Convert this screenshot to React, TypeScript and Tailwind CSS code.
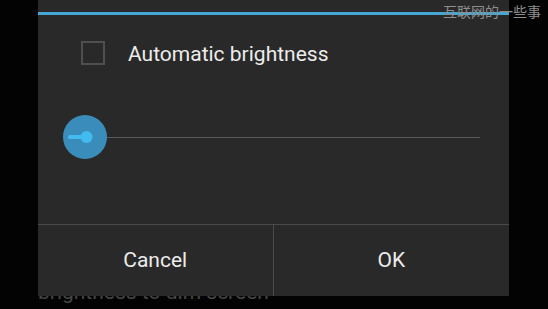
import React from "react";

export default function App() {
  return (
    <div
      className="relative w-[548px] h-[309px] overflow-hidden bg-[#030303]"
      style={{ fontFamily: "Roboto, 'Noto Sans', sans-serif" }}
    >
      {/* background text peeking out below the dialog */}
      <div className="absolute left-[38px] top-[282px] text-[21px] leading-[21px] text-[#464646] whitespace-nowrap">
        brightness to dim screen
      </div>

      {/* dialog */}
      <div className="relative z-10 ml-[38px] w-[471px] h-[296px] bg-[#292929] flex flex-col">
        <div className="h-[12px]" />
        <div className="h-[3px] bg-[#45a8d4]" />

        {/* checkbox row */}
        <div className="flex items-center pt-[25px] pl-[43px]">
          <div className="w-[24px] h-[24px] border-2 border-[#4f4f4f] box-border" />
          <span className="ml-[23px] text-[21px] leading-[24px] text-[#ececec] pt-[2px]">
            Automatic brightness
          </span>
        </div>

        {/* slider */}
        <div className="flex items-center mt-[49px] pl-[25px] pr-[29px] h-[44px]">
          <svg width="44" height="44" viewBox="0 0 44 44" className="shrink-0">
            <circle cx="22" cy="22" r="22" fill="#3a8dba" />
            <rect x="5" y="20" width="18" height="4" rx="2" fill="#42bcee" />
            <circle cx="23.5" cy="22" r="6" fill="#42bcee" />
          </svg>
          <div className="flex-1 h-px bg-[#585858]" />
        </div>

        <div className="flex-1" />

        {/* buttons */}
        <div className="grid grid-cols-2 h-[72px] border-t border-[#4a4a4a]">
          <div className="flex items-center justify-center border-r border-[#4a4a4a] text-[21px] text-[#ececec]">
            Cancel
          </div>
          <div className="flex items-center justify-center text-[21px] text-[#ececec]">
            OK
          </div>
        </div>
      </div>

      {/* watermark */}
      <div
        className="absolute left-[443px] top-[3px] z-20 text-[14px] leading-[16px] text-[#8e8e8e] whitespace-nowrap"
        style={{ fontFamily: "'Noto Sans CJK SC', sans-serif" }}
      >
        互联网的一些事
      </div>
    </div>
  );
}
